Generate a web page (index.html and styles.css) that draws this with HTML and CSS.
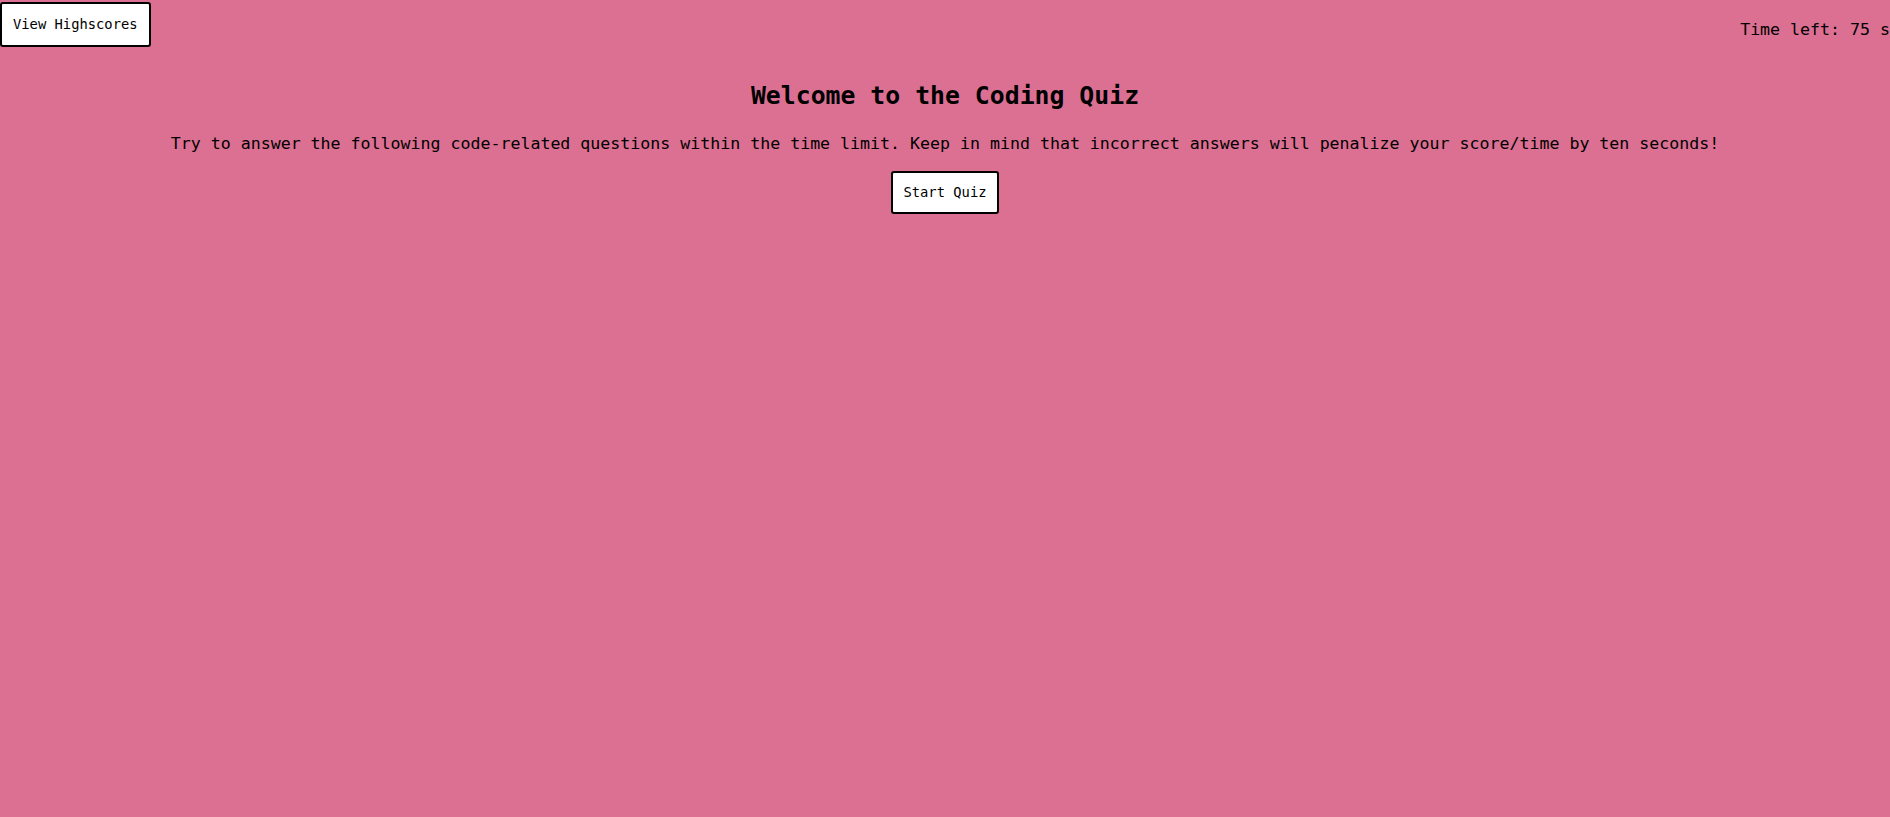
FILE: index.html
```html
<!DOCTYPE html>
<html lang="en">
<head>
<meta charset="utf-8">
<title>Coding Quiz</title>
<link rel="stylesheet" href="styles.css">
</head>
<body>
<header class="top-bar">
  <button class="btn btn-highscores">View Highscores</button>
  <div class="timer">Time left: 75 s</div>
</header>
<main class="intro">
  <h2 class="intro-title">Welcome to the Coding Quiz</h2>
  <p class="intro-text">Try to answer the following code-related questions within the time limit. Keep in mind that incorrect answers will penalize your score/time by ten seconds!</p>
  <button class="btn btn-start">Start Quiz</button>
</main>
</body>
</html>
```
FILE: styles.css
```css
html, body {
  margin: 0;
  padding: 0;
}
body {
  background: #db7093;
  color: #000;
  font-family: "DejaVu Sans Mono", "Liberation Mono", monospace;
  min-height: 100vh;
}
.top-bar {
  display: flex;
  justify-content: space-between;
  align-items: flex-start;
}
.btn {
  font-family: "DejaVu Sans Mono", "Liberation Mono", monospace;
  font-size: 13.8px;
  line-height: 17px;
  background: #fff;
  color: #000;
  border: 2px solid #000;
  border-radius: 3px;
  padding: 12px 11px;
  cursor: pointer;
}
.btn-highscores {
  margin-top: 2px;
}
.timer {
  font-size: 16.6px;
  line-height: 20px;
  margin-top: 20px;
  white-space: nowrap;
}
.intro {
  display: flex;
  flex-direction: column;
  align-items: center;
  text-align: center;
}
.intro-title {
  font-size: 24.8px;
  line-height: 30px;
  font-weight: bold;
  margin: 34px 0 0;
}
.intro-text {
  font-size: 16.6px;
  line-height: 20px;
  margin: 23px 0 0;
}
.btn-start {
  margin-top: 17px;
  padding: 11px 10px;
}
```
